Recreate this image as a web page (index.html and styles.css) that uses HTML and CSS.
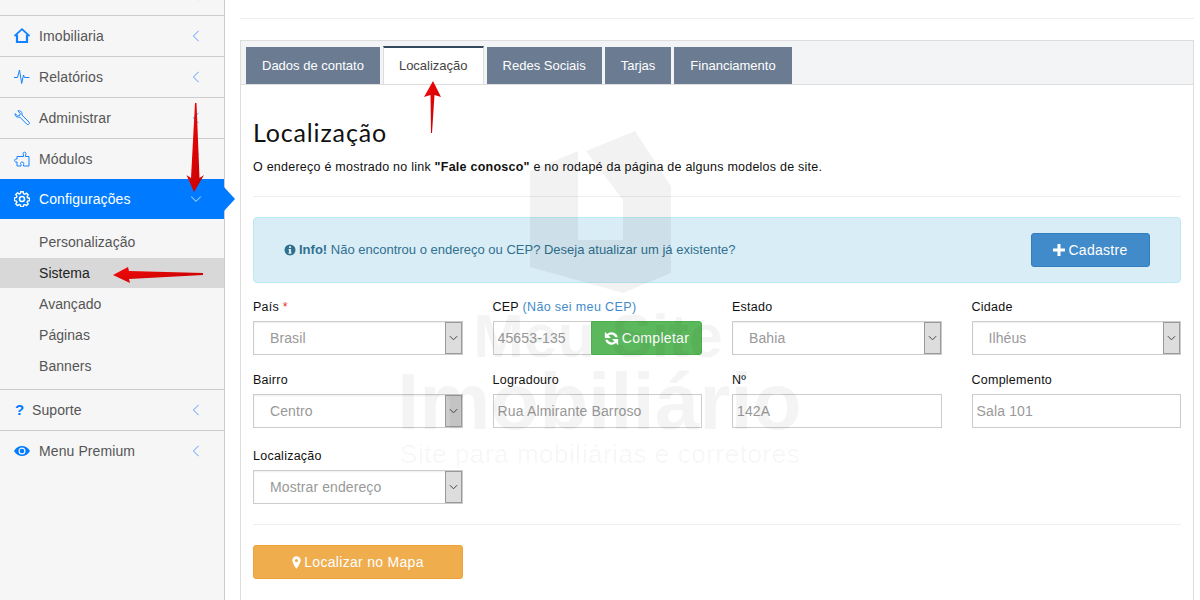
FILE: index.html
```html
<!DOCTYPE html>
<html lang="pt-BR">
<head>
<meta charset="utf-8">
<title>Localização</title>
<link rel="stylesheet" href="styles.css">
</head>
<body>
<div class="page">
  <aside class="sidebar">
    <a class="item item-first">
      <svg class="ico ico-fill" viewBox="0 0 16 16"><rect x="3" y="1" width="11" height="14"/></svg>
      <span class="label"></span>
      <svg class="chev" viewBox="0 0 10 14"><path d="M8 1 2 7l6 6"/></svg>
    </a>
    <a class="item">
      <svg class="ico" viewBox="0 0 16 16"><path d="M.4 8 8 1.200 15.600 8" fill="none" stroke-width="1.800"/><path d="M3 6.500v7.500h10V6.500" fill="none" stroke-width="2.200"/></svg>
      <span class="label">Imobiliaria</span>
      <svg class="chev" viewBox="0 0 10 14"><path d="M8 1 2 7l6 6"/></svg>
    </a>
    <a class="item">
      <svg class="ico" viewBox="0 0 16 16"><path d="M0 8.500h3.500L5.500 1l2.200 13.500 1.800-8.500 1 2.500h5" fill="none" stroke-width="1"/></svg>
      <span class="label">Relatórios</span>
      <svg class="chev" viewBox="0 0 10 14"><path d="M8 1 2 7l6 6"/></svg>
    </a>
    <a class="item">
      <svg class="ico" viewBox="0 0 16 16"><path d="M1.200 3.600 3.700 6l2-.6.6-2L3.800 1C6 .1 8.200 1.600 8 4l-.1 1 7 7c.7.8.6 1.500 0 2.200-.7.600-1.500.6-2.100 0l-7-7.100-1 .1C2.500 7.400.6 6 1.200 3.600z" fill="none" stroke-width="1"/></svg>
      <span class="label">Administrar</span>
      <svg class="chev" viewBox="0 0 10 14"><path d="M8 1 2 7l6 6"/></svg>
    </a>
    <a class="item">
      <svg class="ico" viewBox="0 0 16 16"><path d="M6 5.500H9.500V4C8.700 3 8.800 1.200 10.500 1.200S12.300 3 11.500 4V5.500H15V15H9.500V13.500C10.300 12.500 9.700 11 8.200 11S6 12.500 7 13.500V15H3V10.800C2 11.500.7 11 .7 9.500S2 7.400 3 8.200V5.500z" fill="none" stroke-width="1"/></svg>
      <span class="label">Módulos</span>
      <svg class="chev" viewBox="0 0 10 14"><path d="M8 1 2 7l6 6"/></svg>
    </a>
    <a class="item item-active">
      <svg class="ico" viewBox="0 0 16 16"><circle cx="8" cy="8" r="2.500" fill="none" stroke-width="1.500"/><path d="M6.800.8h2.400l.4 2 1.200.5 1.700-1.100 1.700 1.700-1.100 1.700.5 1.200 2 .4v2.400l-2 .4-.5 1.200 1.100 1.700-1.700 1.700-1.700-1.100-1.200.5-.4 2H6.800l-.4-2-1.200-.5-1.700 1.100-1.700-1.700 1.100-1.700-.5-1.200-2-.4V6.800l2-.4.500-1.200-1.100-1.700 1.700-1.700 1.700 1.100 1.200-.5z" fill="none" stroke-width="1.400"/></svg>
      <span class="label">Configurações</span>
      <svg class="chev chev-down" viewBox="0 0 14 10"><path d="M1 2l6 6 6-6"/></svg>
    </a>
    <nav class="submenu">
      <a class="sub">Personalização</a>
      <a class="sub sub-current">Sistema</a>
      <a class="sub">Avançado</a>
      <a class="sub">Páginas</a>
      <a class="sub">Banners</a>
    </nav>
    <a class="item item-help">
      <span class="qmark">?</span>
      <span class="label">Suporte</span>
      <svg class="chev" viewBox="0 0 10 14"><path d="M8 1 2 7l6 6"/></svg>
    </a>
    <a class="item item-last">
      <svg class="ico ico-fill" viewBox="0 0 16 16"><path fill-rule="evenodd" d="M0 8c2-3.200 4.800-5 8-5s6 1.800 8 5c-2 3.200-4.800 5-8 5s-6-1.800-8-5zm8-3.500a3.500 3.500 0 1 0 0 7 3.500 3.500 0 0 0 0-7zM6 6.500a2.500 2.500 0 0 1 2-.8 2.300 2.300 0 1 1-2.300 2.300c0-.5.100-1 .3-1.500z"/></svg>
      <span class="label">Menu Premium</span>
      <svg class="chev" viewBox="0 0 10 14"><path d="M8 1 2 7l6 6"/></svg>
    </a>
  </aside>

  <main class="main">
    <div class="topbar"></div>
    <section class="panel">
      <div class="tabs">
        <a class="tab">Dados de contato</a>
        <a class="tab tab-active">Localização</a>
        <a class="tab">Redes Sociais</a>
        <a class="tab">Tarjas</a>
        <a class="tab">Financiamento</a>
      </div>
      <div class="content">
        <h2 class="title">Localização</h2>
        <p class="lead">O endereço é mostrado no link <b>"Fale conosco"</b> e no rodapé da página de alguns modelos de site.</p>
        <hr class="rule rule-lead">
        <div class="alert">
          <span class="alert-text"><svg class="info" viewBox="0 0 12 12"><path fill-rule="evenodd" d="M6 .5a5.500 5.500 0 1 1 0 11 5.500 5.500 0 0 1 0-11zM5 2.200v1.700h2V2.200zM4.500 5v1.200H5v2.300h-.5v1.200h3V8.500H7V5z"/></svg><b>Info!</b> Não encontrou o endereço ou CEP? Deseja atualizar um já existente?</span>
          <button class="btn btn-blue" type="button"><svg class="btn-ico" viewBox="0 0 12 12"><path d="M4.500 0h3v4.500H12v3H7.500V12h-3V7.500H0v-3h4.500z"/></svg>Cadastre</button>
        </div>
        <div class="form">
          <div class="field">
            <label class="flabel">País <span class="req">*</span></label>
            <div class="sel"><select class="sel-native"><option>Brasil</option></select><span class="sel-btn"><svg viewBox="0 0 10 6"><path d="M1 1l4 4 4-4"/></svg></span></div>
          </div>
          <div class="field">
            <label class="flabel">CEP <a class="hint">(Não sei meu CEP)</a></label>
            <div class="group"><input class="input input-cep" value="45653-135"><button class="btn btn-green" type="button"><svg class="btn-ico" viewBox="0 0 14 14"><path d="M12.800 5.800A6 6 0 0 0 2.800 2.800L.8.800v5.700h5.700L4.300 4.300a3.900 3.900 0 0 1 6.200 1.500zM1.200 8.200A6 6 0 0 0 11.200 11.200l2 2V7.500H7.500l2.200 2.200a3.900 3.900 0 0 1-6.200-1.500z"/></svg>Completar</button></div>
          </div>
          <div class="field">
            <label class="flabel">Estado</label>
            <div class="sel"><select class="sel-native"><option>Bahia</option></select><span class="sel-btn"><svg viewBox="0 0 10 6"><path d="M1 1l4 4 4-4"/></svg></span></div>
          </div>
          <div class="field">
            <label class="flabel">Cidade</label>
            <div class="sel"><select class="sel-native"><option>Ilhéus</option></select><span class="sel-btn"><svg viewBox="0 0 10 6"><path d="M1 1l4 4 4-4"/></svg></span></div>
          </div>
          <div class="field">
            <label class="flabel">Bairro</label>
            <div class="sel"><select class="sel-native"><option>Centro</option></select><span class="sel-btn sel-btn-hover"><svg viewBox="0 0 10 6"><path d="M1 1l4 4 4-4"/></svg></span></div>
          </div>
          <div class="field">
            <label class="flabel">Logradouro</label>
            <input class="input" value="Rua Almirante Barroso">
          </div>
          <div class="field">
            <label class="flabel">Nº</label>
            <input class="input" value="142A">
          </div>
          <div class="field">
            <label class="flabel">Complemento</label>
            <input class="input" value="Sala 101">
          </div>
          <div class="field field-last">
            <label class="flabel">Localização</label>
            <div class="sel"><select class="sel-native"><option>Mostrar endereço</option></select><span class="sel-btn"><svg viewBox="0 0 10 6"><path d="M1 1l4 4 4-4"/></svg></span></div>
          </div>
        </div>
        <hr class="rule rule-form">
        <button class="btn btn-orange" type="button"><svg class="btn-ico" viewBox="0 0 10 14"><path fill-rule="evenodd" d="M5 0a4.700 4.700 0 0 1 4.700 4.700C9.700 7.500 5 14 5 14S.3 7.500.3 4.700A4.700 4.700 0 0 1 5 0zm0 3a1.800 1.800 0 1 0 0 3.600A1.800 1.800 0 0 0 5 3z"/></svg>Localizar no Mapa</button>
      </div>
    </section>
  </main>

  <div class="watermark">
    <svg class="wm-house" viewBox="0 0 142 163"><path d="M0 41 48 21V110H93V70L56 21 105 1 141 56V143L93 163 0 137z"/></svg>
    <div class="wm-line1">Meu Site</div>
    <div class="wm-line2">Imobiliário</div>
    <div class="wm-line3">Site para mobiliárias e corretores</div>
  </div>

  <svg class="arrows" viewBox="0 0 1200 600">
    <defs>
      <linearGradient id="red" x1="0" y1="0" x2="1" y2="1">
        <stop offset="0" stop-color="#f50a0a"/>
        <stop offset="1" stop-color="#c00000"/>
      </linearGradient>
    </defs>
    <path fill="url(#red)" d="M195 103h1.500L199.500 178l4.500-3-10 17-7.500-17 4.500 3z"/>
    <path fill="url(#red)" d="M203 273v2L129 279l1 4-17-8 15-8 1 4z"/>
    <path fill="url(#red)" d="M431 133h1L434.500 95l6.500 2-8-16-9 16 6.500-2z"/>
  </svg>
</div>
</body>
</html>
```

FILE: styles.css
```css
* { box-sizing: border-box; }
html, body { margin: 0; padding: 0; height: 100%; overflow: hidden; background: #fff; }
body { font-family: "Liberation Sans", Arial, sans-serif; font-size: 14px; color: #333; }
.page { position: relative; display: flex; width: 1200px; height: 600px; overflow: hidden; }

/* sidebar */
.sidebar { width: 225px; flex: none; height: 600px; background: #f6f6f6; border-right: 1px solid #ccc; }
.item { position: relative; display: flex; align-items: center; height: 41px; padding: 0 20px 0 14px; border-bottom: 1px solid #ccc; color: #555; line-height: 20px; }
.item-first { height: 16px; overflow: hidden; align-items: flex-end; padding-bottom: 14px; }
.item-last { border-bottom-color: transparent; }
.item-active { height: 40px; margin-top: -1px; background: #007bff; color: #fff; border-bottom: 0; }
.item-active::after { content: ""; position: absolute; left: 224px; top: 8px; border-left: 11px solid #007bff; border-top: 12px solid transparent; border-bottom: 12px solid transparent; }
.item-help { padding-left: 15px; }
.ico { width: 16px; height: 16px; flex: none; margin-right: 9px; stroke: #1482ff; }
.ico-fill { fill: #007bff; stroke: none; }
.item-active .ico { stroke: #fff; }
.label { flex: 1; letter-spacing: .1px; }
.chev { width: 10px; height: 12px; flex: none; margin-right: 3px; fill: none; stroke: #5296ff; stroke-width: 1.100; }
.chev-down { width: 12px; height: 8px; margin-right: 2px; stroke: #e8f2ff; }
.qmark { width: 8px; margin-right: 9px; font-weight: 700; font-size: 15px; color: #007bff; }
.submenu { display: flex; flex-direction: column; height: 171px; padding: 8px 0; border-bottom: 1px solid #ccc; }
.sub { height: 31px; padding-left: 39px; line-height: 31px; color: #555; letter-spacing: .05px; }
.sub-current { height: 30px; margin-bottom: 1px; line-height: 30px; background: #d8d8d8; color: #222; }

/* main */
.main { flex: 1; min-width: 0; padding: 0 6px 0 15px; }
.topbar { height: 19px; border-bottom: 1px solid #eee; margin-bottom: 21px; }
.panel { height: 600px; border: 1px solid #ddd; border-bottom: 0; }
.tabs { display: flex; gap: 3px; height: 44px; padding: 6px 0 0 5px; background: #f3f4f6; border-bottom: 1px solid #ddd; }
.tab { height: 37px; padding: 0 16px; line-height: 37px; background: #6b7c92; color: #fff; font-size: 13px; }
.tab-active { height: 38px; margin-top: -1px; padding: 0 15px; line-height: 36px; background: #fff; color: #444; border-top: 2px solid #34495e; border-left: 1px solid #ddd; border-right: 1px solid #ddd; }
.content { padding: 32px 12px 0; }
.title { height: 34px; margin: 0 0 6px; line-height: 31px; font-family: Lato, "Open Sans", sans-serif; font-size: 25px; font-weight: 400; color: #111; letter-spacing: .85px; }
.lead { height: 20px; margin: 0; line-height: 20px; font-size: 12.5px; color: #111; letter-spacing: .24px; }
.rule { border: 0; border-top: 1px solid #eee; }
.rule-lead { margin: 19px 0 20px; }
.rule-form { margin: 20px 0; }
.alert { display: flex; align-items: center; justify-content: space-between; height: 66px; padding: 0 30px; background: #d9edf7; border: 1px solid #bce8f1; border-radius: 4px; color: #31708f; font-size: 13px; line-height: 20px; }
.alert-text { display: block; }
.info { width: 12px; height: 12px; margin-right: 3px; vertical-align: -2px; fill: #31708f; }
.btn { display: inline-flex; align-items: center; justify-content: center; height: 34px; border: 1px solid transparent; border-radius: 3px; color: #fff; font: 14px "Liberation Sans", Arial, sans-serif; letter-spacing: .3px; }
.btn-ico { width: 12px; height: 12px; margin-right: 3px; fill: #fff; flex: none; }
.btn-blue { width: 119px; background: #428bca; border-color: #357ebd; }
.btn-green { width: 111px; background: #5cb85c; border-color: #4cae4c; border-radius: 0 3px 3px 0; }
.btn-green .btn-ico { width: 15px; height: 15px; }
.btn-orange { width: 210px; background: #f0ad4e; border-color: #eea236; }
.btn-orange .btn-ico { width: 9px; height: 13px; }

/* form */
.form { display: grid; grid-template-columns: repeat(4, 1fr); column-gap: 30px; row-gap: 14px; margin-top: 13px; }
.field { display: flex; flex-direction: column; gap: 5px; min-width: 0; }
.field-last { margin-top: 3px; }
.flabel { height: 20px; line-height: 22px; font-size: 12.5px; color: #111; letter-spacing: .25px; }
.req { color: #e9322d; }
.hint { color: #428bca; letter-spacing: .37px; }
.input { width: 100%; height: 34px; padding: 0 4px; border: 1px solid #ccc; background: #fff; color: #999; font: 14px "Liberation Sans", Arial, sans-serif; letter-spacing: .15px; outline: none; }
.group { display: flex; }
.input-cep { flex: 1; min-width: 0; border-right: 0; }
.sel { display: flex; height: 34px; border: 1px solid #ccc; background: #fff; box-shadow: inset 0 1px 2px rgba(0,0,0,.07); }
.sel-native { flex: 1; min-width: 0; height: 100%; padding: 0 0 0 16px; border: 0; background: transparent; color: #999; font: 14px "Liberation Sans", Arial, sans-serif; letter-spacing: .1px; appearance: none; -webkit-appearance: none; outline: none; }
.sel-btn { display: flex; align-items: center; justify-content: center; width: 17px; background: #ddd; border: 1px solid #999; flex: none; }
.sel-btn svg { width: 9px; height: 6px; fill: none; stroke: #444; stroke-width: 1.100; }
.sel-btn-hover { background: #ccc; }

/* overlays */
.watermark { position: absolute; left: 400px; top: 130px; width: 400px; height: 340px; pointer-events: none; color: rgba(0,0,0,.045); text-align: center; white-space: nowrap; }
.wm-house { position: absolute; left: 130px; top: 0; width: 142px; height: 163px; fill: rgba(0,0,0,.05); }
.wm-line1 { position: absolute; top: 176px; left: -2px; width: 100%; font-size: 60.7px; line-height: 60px; font-weight: 700; }
.wm-line2 { position: absolute; top: 234px; left: -3px; width: 100%; font-size: 80px; line-height: 76px; font-weight: 700; }
.wm-line3 { position: absolute; top: 306px; left: 0; width: 100%; font-size: 26px; line-height: 36px; letter-spacing: .55px; }
.arrows { position: absolute; left: 0; top: 0; width: 1200px; height: 600px; pointer-events: none; }
```
